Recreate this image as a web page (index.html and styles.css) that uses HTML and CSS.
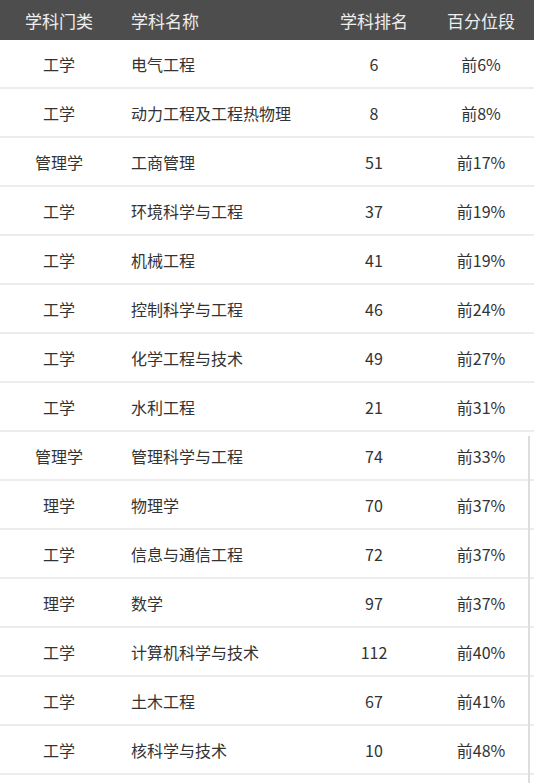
FILE: index.html
```html
<!DOCTYPE html>
<html lang="zh">
<head>
<meta charset="utf-8">
<link rel="stylesheet" href="styles.css">
</head>
<body>
<div class="table">
  <div class="row head">
    <div class="c1">学科门类</div><div class="c2">学科名称</div><div class="c3">学科排名</div><div class="c4">百分位段</div>
  </div>
  <div class="row"><div class="c1">工学</div><div class="c2">电气工程</div><div class="c3">6</div><div class="c4">前6%</div></div>
  <div class="row"><div class="c1">工学</div><div class="c2">动力工程及工程热物理</div><div class="c3">8</div><div class="c4">前8%</div></div>
  <div class="row"><div class="c1">管理学</div><div class="c2">工商管理</div><div class="c3">51</div><div class="c4">前17%</div></div>
  <div class="row"><div class="c1">工学</div><div class="c2">环境科学与工程</div><div class="c3">37</div><div class="c4">前19%</div></div>
  <div class="row"><div class="c1">工学</div><div class="c2">机械工程</div><div class="c3">41</div><div class="c4">前19%</div></div>
  <div class="row"><div class="c1">工学</div><div class="c2">控制科学与工程</div><div class="c3">46</div><div class="c4">前24%</div></div>
  <div class="row"><div class="c1">工学</div><div class="c2">化学工程与技术</div><div class="c3">49</div><div class="c4">前27%</div></div>
  <div class="row"><div class="c1">工学</div><div class="c2">水利工程</div><div class="c3">21</div><div class="c4">前31%</div></div>
  <div class="row"><div class="c1">管理学</div><div class="c2">管理科学与工程</div><div class="c3">74</div><div class="c4">前33%</div></div>
  <div class="row"><div class="c1">理学</div><div class="c2">物理学</div><div class="c3">70</div><div class="c4">前37%</div></div>
  <div class="row"><div class="c1">工学</div><div class="c2">信息与通信工程</div><div class="c3">72</div><div class="c4">前37%</div></div>
  <div class="row"><div class="c1">理学</div><div class="c2">数学</div><div class="c3">97</div><div class="c4">前37%</div></div>
  <div class="row"><div class="c1">工学</div><div class="c2">计算机科学与技术</div><div class="c3">112</div><div class="c4">前40%</div></div>
  <div class="row"><div class="c1">工学</div><div class="c2">土木工程</div><div class="c3">67</div><div class="c4">前41%</div></div>
  <div class="row"><div class="c1">工学</div><div class="c2">核科学与技术</div><div class="c3">10</div><div class="c4">前48%</div></div>
  <div class="row"><div class="c1"></div><div class="c2"></div><div class="c3"></div><div class="c4"></div></div>
  <div class="vline"></div>
</div>
</body>
</html>
```

FILE: styles.css
```css
html, body {
  margin: 0;
  padding: 0;
  background: #ffffff;
  overflow: hidden;
}
body {
  font-family: "Noto Sans CJK SC", "Noto Sans", sans-serif;
  color: #333333;
}
.table {
  position: relative;
  width: 534px;
}
.row {
  display: grid;
  grid-template-columns: 118px 202px 108px 106px;
  height: 47px;
  align-items: center;
  border-bottom: 2px solid #ececec;
  font-size: 16px;
}
.row.head {
  height: 40px;
  background: #4d4d4d;
  color: #eeeeee;
  font-size: 17px;
  border-bottom: none;
}
.c1, .c3, .c4 {
  text-align: center;
}
.c2 {
  padding-left: 13px;
}
.vline {
  position: absolute;
  left: 528px;
  top: 436px;
  width: 2px;
  height: 400px;
  background: #dddddd;
}
```
